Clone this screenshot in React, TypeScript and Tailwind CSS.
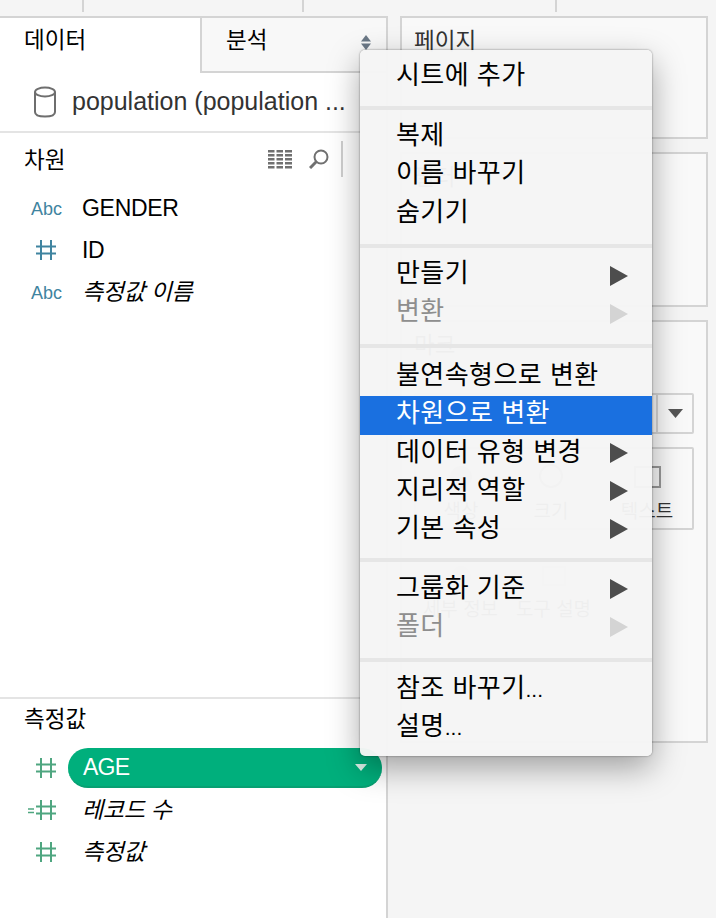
function HashIcon({ color, eq }: { color: string; eq?: boolean }) {
	return (
		<svg width="36" height="20" viewBox="0 0 36 20" fill="none" stroke={color} strokeWidth="2">
			{eq && <path d="M0 9H6M0 12.5H6" strokeWidth="1.5" />}
			<path d="M13 0V20M23 0V20M8 6.5H28M8 13.5H28" />
		</svg>
	);
}

function Row({ icon, label, italic }: { icon: React.ReactNode; label: string; italic?: boolean }) {
	return (
		<div className="flex h-[42px] items-center">
			<div className="flex w-[82px] justify-end pr-[18px]">{icon}</div>
			<span className={`text-[23px] tracking-[-0.3px] text-black ${italic ? "italic" : ""}`}>{label}</span>
		</div>
	);
}

function Abc() {
	return <span className="mr-[2px] mt-[3px] text-[18px] text-[#3f84a0]">Abc</span>;
}

function MenuItem({ label, dots, arrow, low, disabled, active }: { label: string; dots?: boolean; arrow?: boolean; low?: boolean; disabled?: boolean; active?: boolean }) {
	return (
		<div className={`flex h-[38.3px] items-start justify-between pl-[36px] pr-[24px] ${active ? "bg-[#1a70e0] text-white" : disabled ? "text-[#8e8e8e]" : "text-black"}`}>
			<span className="mt-[-1px] text-[26px] leading-[36px] tracking-[0.45px]">
				{label}
				{dots && <span className="text-[21px] tracking-normal">...</span>}
			</span>
			{arrow && (
				<svg className={low ? "mt-[10px]" : "mt-[8px]"} width="18" height="20" viewBox="0 0 18 20">
					<path d="M0 0L18 10L0 20Z" fill={disabled ? "#d4d4d4" : "#4d4d4d"} />
				</svg>
			)}
		</div>
	);
}

function Sep() {
	return <div className="h-[4px] bg-[#e6e6e6]" />;
}

function ContextMenu() {
	return (
		<div className="absolute left-[360px] top-[50px] flex h-[706px] w-[292px] flex-col rounded-[5px] bg-[#f5f5f5]/[0.97] shadow-[0_12px_32px_rgba(0,0,0,0.35),0_0_2px_rgba(0,0,0,0.5)]">
			<div className="h-[56px] pt-[8px]">
				<MenuItem label="시트에 추가" />
			</div>
			<Sep />
			<div className="h-[134px] pt-[8px]">
				<MenuItem label="복제" />
				<MenuItem label="이름 바꾸기" />
				<MenuItem label="숨기기" />
			</div>
			<Sep />
			<div className="h-[96px] pt-[8px]">
				<MenuItem label="만들기" arrow low />
				<MenuItem label="변환" arrow low disabled />
			</div>
			<Sep />
			<div className="h-[210px] pt-[10px]">
				<MenuItem label="불연속형으로 변환" />
				<MenuItem label="차원으로 변환" active />
				<MenuItem label="데이터 유형 변경" arrow />
				<MenuItem label="지리적 역할" arrow />
				<MenuItem label="기본 속성" arrow />
			</div>
			<Sep />
			<div className="h-[96px] pt-[9px]">
				<MenuItem label="그룹화 기준" arrow />
				<MenuItem label="폴더" arrow disabled />
			</div>
			<Sep />
			<div className="pt-[9px]">
				<MenuItem label="참조 바꾸기" dots />
				<MenuItem label="설명" dots />
			</div>
		</div>
	);
}

function MarkCell({ label, last, children }: { label: string; last?: boolean; children: React.ReactNode }) {
	return (
		<div className={`flex flex-1 flex-col items-center justify-end pb-[4px] ${last ? "pl-[6px]" : ""}`}>
			{children}
			<span className="mt-[12px] whitespace-nowrap text-[19px] leading-[24px] text-[#333]">{label}</span>
		</div>
	);
}

export default function App() {
	return (
		<div className="relative h-[918px] w-[716px] overflow-hidden bg-[#f5f5f5] font-['Liberation_Sans','Noto_Sans_CJK_KR',sans-serif]">
			{/* top strip */}
			<div className="flex h-[12px]">
				<div className="w-[84px] border-r-2 border-[#d4d4d4]" />
				<div className="w-[220px] border-r-2 border-[#d4d4d4]" />
				<div className="w-[253px] border-r-2 border-[#d4d4d4]" />
			</div>

			<div className="mt-[4px] flex h-[902px]">
				{/* data pane */}
				<div className="flex w-[388px] flex-col border-r-2 border-t-2 border-[#d4d4d4] bg-white">
					<div className="flex h-[55px]">
						<div className="w-[200px] pl-[24px] pt-[5px] text-[22.5px] leading-[36px] text-black">데이터</div>
						<div className="relative flex-1 border-b-2 border-l-2 border-[#d4d4d4] bg-[#f8f8f8] pl-[24px] pt-[5px] text-[22.5px] leading-[36px] text-black">
							분석
							<svg className="absolute left-[158px] top-[17px]" width="12" height="16" viewBox="0 0 12 16" fill="#6b7886">
								<path d="M6 0L11 6.5H1Z" />
								<path d="M6 15L11 8.5H1Z" />
							</svg>
						</div>
					</div>
					<div className="flex h-[60px] items-center border-b-2 border-[#e4e4e4] pl-[33px]">
						<svg width="24" height="32" viewBox="0 0 24 32" fill="none" stroke="#6e6e6e" strokeWidth="2">
							<ellipse cx="12" cy="6" rx="10" ry="4.5" />
							<path d="M2 6V26C2 29 6 30.5 12 30.5C18 30.5 22 29 22 26V6" />
						</svg>
						<span className="ml-[15px] whitespace-nowrap text-[25px] text-[#333]">population (population ...</span>
					</div>
					<div className="flex h-[52px] items-center pl-[24px] pr-[43px]">
						<span className="mt-[4px] text-[22.5px] leading-[36px] text-black">차원</span>
						<div className="ml-auto flex items-center">
							<svg width="24" height="19" viewBox="0 0 24 19" fill="#707070">
								{[0, 4, 8, 12, 16].map((y) => (
									<path key={y} d={`M0 ${y}H6.5V${y + 2.4}H0ZM8.5 ${y}H15V${y + 2.4}H8.5ZM17 ${y}H24V${y + 2.4}H17Z`} />
								))}
							</svg>
							<svg className="ml-[17px]" width="20" height="20" viewBox="0 0 20 20" fill="none" stroke="#707070" strokeWidth="2">
								<circle cx="12" cy="8" r="6.5" />
								<path d="M7.5 12.5L1 19" strokeWidth="3" />
							</svg>
							<div className="ml-[12px] h-[36px] w-[2px] bg-[#cfcfcf]" />
						</div>
					</div>
					<div className="flex-1 pt-[2px]">
						<Row icon={<Abc />} label="GENDER" />
						<Row icon={<HashIcon color="#3f84a0" />} label="ID" />
						<Row icon={<Abc />} label="측정값 이름" italic />
					</div>
					<div className="h-[221px] border-t-2 border-[#e4e4e4]">
						<div className="pl-[24px] pt-[3px] text-[22.5px] leading-[36px] text-black">측정값</div>
						<div className="mt-[9px] flex h-[42px] items-center">
							<div className="flex w-[68px] justify-end pr-[4px]">
								<HashIcon color="#4fa680" />
							</div>
							<div className="flex h-[40px] w-[314px] items-center justify-between rounded-[20px] border-b-2 border-[#07a072] bg-[#00af7c] pl-[15px] pr-[15px]">
								<span className="text-[23px] tracking-[-0.8px] text-white">AGE</span>
								<svg width="12" height="7" viewBox="0 0 12 7" fill="#dff3ec">
									<path d="M0 0H12L6 7Z" />
								</svg>
							</div>
						</div>
						<Row icon={<HashIcon color="#4fa680" eq />} label="레코드 수" italic />
						<Row icon={<HashIcon color="#4fa680" />} label="측정값" italic />
					</div>
				</div>

				{/* shelves */}
				<div className="flex w-[320px] flex-col gap-[13px] pl-[12px]">
					<div className="h-[123px] w-[308px] border-2 border-[#d4d4d4] bg-[#f9f9f9] pl-[12px] pt-[6px] text-[22.5px] leading-[36px] text-[#333]">페이지</div>
					<div className="h-[155px] w-[308px] border-2 border-[#d4d4d4] bg-[#f9f9f9] pl-[12px] pt-[6px] text-[22.5px] leading-[36px] text-[#333]">필터</div>
					<div className="h-[423px] w-[308px] border-2 border-[#d4d4d4] bg-[#f9f9f9] pl-[12px] pr-[12px] pt-[6px]">
						<div className="text-[22.5px] leading-[36px] text-[#333]">마크</div>
						<div className="mt-[29px] flex h-[41px] items-center justify-end rounded-[2px] border-2 border-[#d4d4d4]">
							<div className="flex h-full w-[36px] items-center justify-center border-l-2 border-[#d4d4d4]">
								<svg width="15" height="9" viewBox="0 0 15 9" fill="#555">
									<path d="M0 0H15L7.5 9Z" />
								</svg>
							</div>
						</div>
						<div className="mt-[13px] flex h-[83px] rounded-[2px] border-2 border-[#d4d4d4]">
							<MarkCell label="색상">
								<div className="h-[22px] w-[22px] rounded-full bg-[#bbb]" />
							</MarkCell>
							<MarkCell label="크기">
								<div className="h-[24px] w-[24px] rounded-full border-2 border-[#999]" />
							</MarkCell>
							<MarkCell label="텍스트" last>
								<div className="h-[22px] w-[27px] border-2 border-[#999]" />
							</MarkCell>
						</div>
						<div className="flex h-[96px] pr-[94px]">
							<MarkCell label="세부 정보">
								<div className="h-[20px] w-[20px] rounded-full bg-[#ccc]" />
							</MarkCell>
							<MarkCell label="도구 설명">
								<div className="h-[20px] w-[24px] border-2 border-[#ccc]" />
							</MarkCell>
						</div>
					</div>
				</div>
			</div>

			<ContextMenu />
		</div>
	);
}
